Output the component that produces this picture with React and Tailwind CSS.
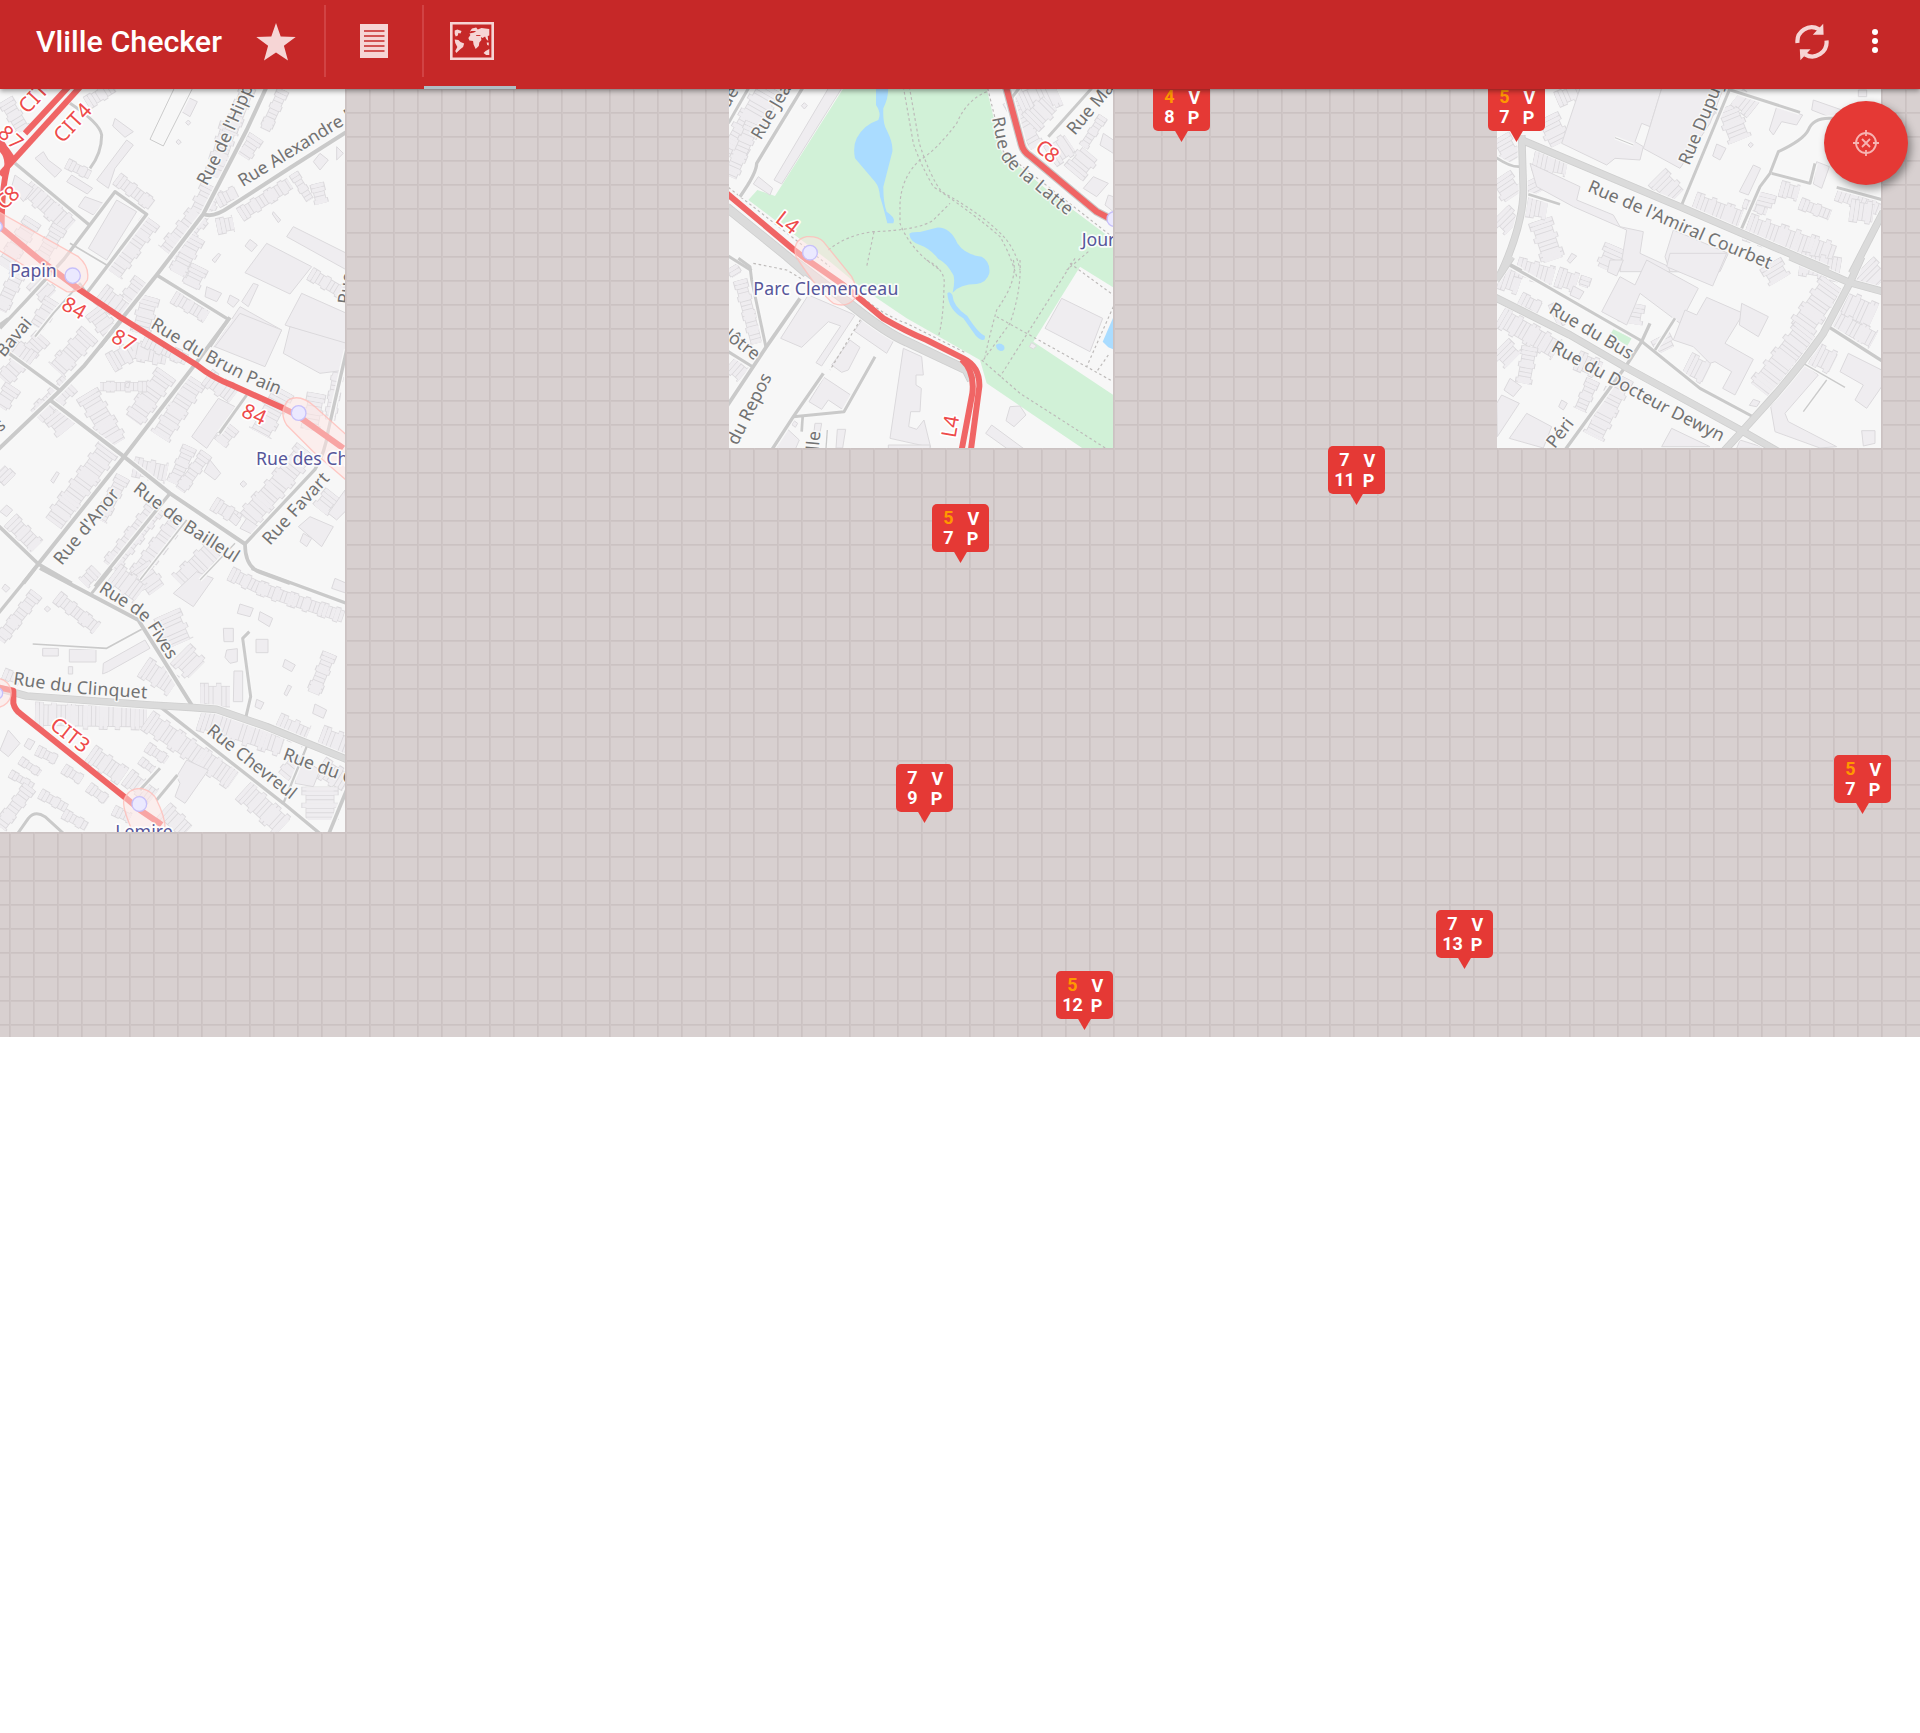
import React, { useId } from "react";

/* Map sections are drawn on a grid of one third of a pixel. */
const OUTLINE = "#dbd9dc";
const BUILDING = "#efedf0";

const leftTile = {
  x: 0, y: 80, w: 345, h: 752,
  sections: [
    {
      x: 0, y: 80,
      rows: [
        ["M640,320 L600,400 L505,520", 62], ["M690,130 L640,290", 48], ["M745,20 L690,160", 40],
        ["M80,320 L210,440", 50], ["M455,420 L340,580", 50], ["M425,600 L380,660", 40],
        ["M100,420 L10,560", 46], ["M180,440 L120,540", 40], ["M200,250 L270,285", 26],
        ["M350,295 L455,375", 34], ["M850,30 L795,150", 30], ["M770,170 L730,230", 40],
        ["M650,365 L710,335", 34], ["M720,405 L870,310", 36], ["M590,470 L530,580", 46],
        ["M650,440 L700,430", 40], ["M300,640 L380,700", 56], ["M280,690 L340,770", 50],
        ["M600,560 L570,620", 46], ["M930,580 L1030,640", 34], ["M60,570 L0,690", 40],
        ["M950,310 L965,370", 34], ["M880,280 L930,360", 24], ["M15,60 L70,150", 40],
        ["M520,650 L620,710", 34], ["M450,650 L420,760", 50], ["M100,600 L150,650", 50],
        ["M260,70 L340,20", 34], ["M160,660 L110,740", 44],
      ],
      shapes: [
        "M350,360 L410,395 L320,540 L265,505Z", "M800,490 L935,560 L870,642 L735,578Z",
        "M880,440 L1040,520 V570 L860,470Z", "M720,680 L845,750 L820,800 H640Z", "M905,640 L1040,700 V800 L855,735Z",
        "M45,285 L100,325 L70,365 L35,320Z", "M215,285 L278,325 L262,342 L200,305Z", "M255,350 L310,370 L280,405 L235,380Z",
        "M380,180 L400,195 L345,265 L325,325 L290,300Z", "M345,115 L400,155 L375,172 L338,138Z",
        "M130,215 L145,240 L185,270 L165,292 L105,235Z", "M960,220 L985,240 L960,270 L940,245Z", "M1010,200 L1030,220 L1010,240Z",
        "M560,50 L592,65 L570,110 L545,95Z", "M620,620 L665,640 L650,665 L615,650Z", "M760,610 L775,615 L745,680 L725,665Z",
        "M750,478 L772,495 L755,515 L735,498Z", "M690,645 L718,660 L700,682 L682,668Z", "M820,395 L842,420 L835,428 L817,402Z",
        "M655,520 L662,524 L645,548 L636,540Z", "M565,120 L572,128 L565,136 L557,128Z", "M535,178 L544,186 L536,194 L528,186Z",
      ],
      major: [],
      roads: [
        ["M800,20 L740,150 L610,402 L470,585 L370,710 L300,800", 12], ["M1045,152 L860,270 L690,380 Q640,415 610,402", 12],
        ["M470,585 L685,718 L630,800", 10], ["M45,250 L268,435", 10], ["M0,745 L80,660 L190,540 L345,335 L440,403 L260,640", 10],
        ["M265,645 L240,610 L160,700 L105,770", 6], ["M210,490 L320,555", 5], ["M210,70 Q300,130 305,165 Q305,220 270,265", 9],
        ["M525,20 L450,178 L490,198 L580,20", 3],
      ],
      transit: ["M215,10 L75,160", "M250,10 L0,285", "M-5,200 Q30,225 20,270 Q5,330 5,445 L120,540 L240,630 L357,709", "M-5,175 L40,240"],
      halos: ["M-5,395 L235,530 Q270,560 262,600 Q240,640 200,635 L-5,510Z"],
      stops: [[218, 587, 23], [-9, 440, 16]],
      names: [["Papin", 30, 590, 140]],
      lines: [["CIT4", 217, 128, -47, 134], ["CIT4", 112, 40, -47, 134], ["87", 33, 172, 42, 74], ["C8", 22, 352, -42, 70], ["84", 223, 683, 30, 72]],
      streets: [["Rue de l'Hippodrome", "M620,320 Q672,225 707,145 L822,-120"], ["Rue Alexandre D", "M728,322 L1028,137 L1228,13"], ["Rue", "M1050,674 L1064,560"]],
    },
    {
      x: 0, y: 320,
      rows: [
        ["M130,50 L10,180", 46], ["M270,40 L170,150", 54], ["M210,190 L110,290", 54], ["M260,220 L350,370", 60],
        ["M330,380 L160,610", 60], ["M160,280 L200,330", 60], ["M500,160 L400,300", 56], ["M330,130 L400,90 L500,110", 50],
        ["M440,200 L300,200", 26], ["M590,180 L480,350", 54], ["M400,440 L500,460", 50], ["M620,170 L700,230", 46],
        ["M850,210 L780,340", 60], ["M950,220 L930,330", 46], ["M1020,120 L990,300", 30], ["M920,390 L830,500 L740,600", 60],
        ["M700,320 L660,370", 36], ["M640,550 L720,600", 36], ["M470,560 L330,740", 50], ["M370,470 L300,600", 36],
        ["M540,590 L400,780", 46], ["M650,680 L540,790", 60], ["M30,600 L110,680", 44], ["M430,60 L560,120", 34],
        ["M30,480 L0,450", 40], ["M100,120 L30,70", 40], ["M40,200 L0,260", 44], ["M1000,520 L960,570", 46],
        ["M570,380 L520,490", 36], ["M620,400 L540,510", 32],
      ],
      shapes: [
        "M720,-20 L845,30 L795,140 L645,80Z", "M870,20 L1040,70 V150 L960,160 L850,100Z", "M655,235 L705,260 L620,385 L575,350Z",
        "M630,420 L662,460 L645,480 L612,455Z", "M930,590 L1000,620 L965,680 L895,620Z", "M910,640 L935,655 L920,680 L900,665Z",
        "M740,595 L775,620 L755,642 L720,625Z", "M700,578 L722,598 L708,618 L688,600Z", "M1035,510 L985,580 L1010,600 L1040,570Z",
        "M730,482 L740,492 L730,502 L720,492Z", "M178,92 L187,100 L178,108 L169,100Z", "M378,190 L390,186 L386,204 L375,200Z",
        "M170,455 L178,460 L160,490 L152,482Z", "M20,555 L38,570 L20,590 L0,575Z",
      ],
      major: [],
      roads: [
        ["M375,-12 L250,140 L180,212 L-5,388", 12], ["M20,95 L180,212", 10], ["M150,240 L372,410 L510,520 L735,672", 12],
        ["M690,-8 L580,140 L372,410 L115,732 L70,790", 12], ["M735,672 L945,448 Q975,400 985,330 L1040,90", 10],
        ["M735,672 Q735,740 780,757 L870,790", 11], ["M510,520 L285,800", 10], ["M705,670 L600,780", 4], ["M-5,617 L115,732 L215,790", 11],
        ["M740,225 L658,340", 9], ["M25,-5 L-5,18", 9], ["M560,600 L420,780", 5],
      ],
      transit: ["M355,-12 L590,135 Q640,175 700,197 L850,265 L890,285 L1030,385"],
      halos: ["M1045,350 L945,260 Q900,220 865,240 Q835,275 860,315 L940,395 L1045,486"],
      stops: [[896, 279, 22]],
      names: [["Rue des Champs", 768, 435, 0]],
      lines: [["87", 372, 60, 28, 72], ["84", 763, 282, 24, 72]],
      streets: [
        ["Bavai", "M12,114 L110,-4"], ["es", "M-24,355 L40,306"], ["Rue du Brun Pain", "M449,22 L602,116 L730,182 L890,247", 437],
        ["Rue d'Anor", "M185,738 L380,500", 277], ["Rue de Bailleul", "M397,512 L555,634 L740,752", 376], ["Rue Favart", "M810,678 L1008,458", 270],
      ],
    },
    {
      x: 0, y: 570,
      rows: [
        ["M110,70 L0,210", 34], ["M170,80 L290,175", 34], ["M420,-10 L470,60", 56], ["M500,130 L540,220", 70],
        ["M540,250 L590,300", 70], ["M430,290 L520,350", 56], ["M600,380 L690,380", 66], ["M105,435 L440,440", 66],
        ["M440,450 L700,630", 56], ["M730,660 L850,770", 60], ["M600,440 L850,520", 70], ["M830,460 L920,500", 56],
        ["M960,500 L1040,530", 60], ["M960,590 L1040,640", 56], ["M270,550 L370,620", 50], ["M380,620 L460,680", 46],
        ["M490,720 L560,785", 50], ["M110,540 L170,570", 26], ["M190,595 L245,630", 26], ["M265,650 L320,690", 26],
        ["M120,670 L200,715", 26], ["M190,730 L260,770", 26], ["M60,570 L120,610", 20], ["M30,610 L100,650", 20],
        ["M90,650 L0,770", 36], ["M990,250 L940,370", 36], ["M690,10 L770,50 L850,80 L1030,140", 36], ["M10,310 L60,330", 28],
        ["M340,720 L390,745", 26], ["M440,530 L500,570", 26], ["M900,560 L850,620", 40], ["M960,650 L960,750", 90],
        ["M420,570 L460,600", 20], ["M340,10 L420,70", 60], ["M290,0 L250,40", 34],
      ],
      shapes: [
        "M590,5 L640,25 L580,110 L520,70Z", "M310,280 L435,210 L450,235 L325,305 L308,312Z", "M208,238 H288 V276 H208Z",
        "M128,235 H175 V258 H128Z", "M205,290 H218 V312 H205Z", "M670,175 H700 V215 H672Z", "M768,208 H804 V248 H768Z",
        "M680,240 L712,236 V275 L690,280 L675,262Z", "M702,303 H728 V395 H700Z", "M720,102 L760,115 L750,140 L712,130Z",
        "M780,125 L818,145 L808,170 L775,150Z", "M855,268 L886,285 L875,305 L848,290Z", "M25,480 L60,520 L25,560 L0,540Z",
        "M560,570 L625,600 L555,700 L525,680 L540,640 L530,620Z", "M895,560 L960,600 L940,650 L885,640Z", "M945,402 L980,420 L970,445 L938,430Z",
        "M865,345 L875,350 L860,378 L852,372Z", "M770,388 L792,398 L782,418 L765,410Z", "M142,108 L152,117 L142,126 L133,117Z",
        "M15,42 L30,55 L18,67 L6,55Z", "M85,505 L105,515 L90,540 L72,528Z", "M1005,25 L1040,40 V70 L995,55Z",
      ],
      major: [["M-5,355 L80,378 L450,405 L570,412 L650,418 L800,470 L1045,570", 20]],
      roads: [
        ["M105,-5 L-5,130", 10], ["M120,-6 L415,150 L575,405", 12], ["M335,-5 L275,70", 9], ["M755,-5 L1045,102", 10],
        ["M98,222 L320,235 L425,178", 5], ["M480,410 L850,700 L965,795", 10], ["M920,530 L850,700", 7], ["M1040,660 L985,795", 11],
        ["M748,185 L728,205 L752,380 L738,440", 9], ["M480,595 L420,660", 9], ["M532,615 L470,690", 9], ["M50,795 L85,745 Q105,720 135,740 L190,790", 9],
      ],
      transit: ["M-5,352 L40,362 L40,400 Q45,420 60,430 L375,682 L420,720 L485,764"],
      halos: ["M400,790 Q365,710 372,690 Q385,653 425,655 Q460,665 470,690 Q500,750 495,790Z", "M-10,325 A42,42 0 0 1 -10,412Z"],
      stops: [[418, 702, 22], [-9, 370, 17]],
      names: [["Lemire", 346, 803, 172]],
      lines: [["CIT3", 211, 494, 38, 130]],
      streets: [
        ["Rue de Fives", "M294,64 L391,124 Q426,145 448,180 L508,275", 303], ["Rue du Clinquet", "M38,343 L235,371 L460,387", 405],
        ["Rue Chevreul", "M617,488 L900,712", 325], ["Rue du Clinquet", "M846,567 L1016,629 L1296,727"],
      ],
    },
  ],
};

const middleTile = {
  x: 729, y: 80, w: 384, h: 368,
  park: "M370,25 L800,25 L845,215 L1000,345 L1140,450 L1180,480 L1180,622 L1080,560 L940,785 L1180,945 L1180,1110 L1095,1110 L800,910 L780,840 L560,715 L420,620 L330,545 L85,360 L112,330 L165,348Z",
  water: [
    "M468,20 L504,20 Q507,50 490,85 Q488,130 500,150 Q520,190 517,215 L490,320 Q490,370 500,395 Q522,410 522,422 L520,430 L502,430 Q490,380 480,350 Q478,320 465,305 L405,235 Q398,200 410,175 Q430,135 475,120 Q485,100 468,75Z",
    "M568,462 Q570,455 600,456 L650,443 Q690,440 712,490 Q735,525 785,530 Q812,545 808,580 Q800,608 770,612 Q720,612 698,638 Q706,600 700,585 Q680,548 655,537 Q630,505 600,495 Q570,485 568,462Z",
    "M682,640 Q690,632 697,645 Q700,680 742,708 Q775,760 795,768 L794,778 Q785,784 768,768 L730,715 Q685,690 682,640Z",
    "M828,795 Q838,785 852,797 Q858,812 842,813 Q828,810 828,795Z", "M1148,785 L1185,700 V810 L1165,802Z",
  ],
  sections: [
    {
      x: 720, y: 80,
      rows: [
        ["M150,20 L30,230", 70], ["M100,130 L30,290", 40], ["M870,60 L950,200", 40], ["M900,80 L1010,30", 80],
        ["M930,130 L990,70", 60], ["M990,230 L1050,190", 60], ["M1150,110 L1090,200", 24], ["M1060,280 L1110,220", 60],
      ],
      shapes: [
        "M325,25 L365,25 L185,312 L162,300Z", "M115,290 L158,325 L150,345 L100,312Z", "M1150,160 L1180,180 V220 L1140,195Z",
        "M1120,290 L1165,310 L1130,350 L1090,325Z", "M1165,345 L1180,350 V395 L1155,375Z", "M253,68 L262,77 L253,87 L244,77Z",
      ],
      major: [["M20,382 L200,528 L260,580", 26]],
      roads: [
        ["M250,20 L110,250 Q110,280 60,350", 10], ["M88,20 L25,130", 9], ["M897,25 L870,60", 9], ["M1115,25 L985,170", 9], ["M20,525 L95,572", 9],
        ["M858,20 L905,195 Q910,215 930,228 L1130,395 L1178,420", 25],
      ],
      paths: [
        "M550,20 L580,190 Q600,250 640,320 Q760,400 840,470 Q870,520 890,590", "M568,20 L598,190 Q630,290 665,335 Q800,410 860,480 Q890,520 900,570",
        "M800,35 Q740,60 710,130 Q650,210 600,240 Q545,290 540,370 L540,430 Q570,510 660,570", "M325,510 Q380,465 460,455 Q600,450 640,420 L690,370",
        "M462,455 L440,560", "M1105,515 L1040,570", "M803,25 L850,215 L1170,465", "M25,322 L330,560",
      ],
      transit: ["M20,340 L220,508 L262,540", "M858,20 L905,195 Q910,215 930,228 L1130,395 L1178,420"],
      halos: ["M228,530 Q215,480 260,470 Q295,468 310,485 L395,590 Q420,640 405,655 Q380,685 340,670 Q300,640 228,530Z"],
      stops: [[270, 518, 22], [1183, 417, 22]],
      names: [["Journal", 1085, 499, 0]],
      lines: [["C8", 983, 213, 40, 70], ["L4", 203, 427, 38, 68]],
      streets: [["Rue Jean", "M122,182 L252,-38"], ["Rue", "M8,115 L62,25"], ["Rue de la Latte", "M816,114 L834,205 Q843,242 878,272 L1060,423", 387], ["Rue Macé", "M1064,168 L1240,-40"]],
    },
    {
      x: 720, y: 260,
      rows: [["M60,60 L110,250", 34], ["M30,310 L70,345", 44], ["M35,20 L50,45", 30]],
      shapes: [
        "M265,105 L405,165 L305,318 L288,308 L362,198 L325,185 L245,262 L182,235Z", "M430,175 L522,240 L500,280 L403,213Z",
        "M390,240 L420,262 L385,330 L365,337 L335,315Z", "M312,352 L392,405 L370,450 L325,420 L305,448 L267,425Z",
        "M550,265 L605,290 L610,345 H588 V375 L604,385 L600,455 H572 L566,500 L590,508 L612,480 L632,562 L510,535Z",
        "M870,440 L900,438 L918,465 L882,500 L858,482Z", "M815,495 L910,565 H860 L797,520Z", "M1025,115 L1148,175 L1110,275 L975,205Z",
        "M200,505 L238,540 L225,570 H165Z", "M285,490 L305,490 L298,530 H280Z", "M352,508 H377 L368,564 H348Z", "M505,555 H630 V570 H505Z",
        "M222,482 L233,490 L226,502 L216,494Z", "M935,248 L950,258 L940,267 L928,260Z",
      ],
      major: [["M225,5 L400,140 Q500,220 560,245 L740,330 L755,360", 26]],
      roads: [
        ["M55,-5 L90,20 L95,60 L138,262", 9], ["M240,115 L138,262 L20,440", 11], ["M20,272 L100,322", 9], ["M465,290 L372,455 L220,470", 9],
        ["M310,340 L220,470 L155,570", 10], ["M248,470 L245,515", 8], ["M322,510 L318,565", 4],
      ],
      paths: [
        "M620,0 Q680,30 672,80 Q670,180 655,230", "M900,0 Q905,90 870,190 L790,300", "M1065,-5 L935,200 L840,350", "M830,170 L1180,365",
        "M880,0 Q895,60 830,150 Q810,220 795,290", "M785,300 L900,400 L1165,570", "M1050,10 L1180,105", "M1180,140 L1100,320", "M100,10 L200,30 L250,60",
        "M430,165 L330,330", "M430,115 Q500,170 560,190 L740,280", "M1165,285 L1130,335",
      ],
      transit: ["M258,-3 L370,75 L430,125 L490,175 Q560,215 620,240 L730,295 Q780,320 778,380 L752,575", "M725,298 Q765,335 757,400 L724,575"],
      halos: [], stops: [],
      names: [["Parc Clemenceau", 100, 106, 435]],
      lines: [["L4", 690, 499, -80, 66]],
      streets: [["Nôtre", "M-10,216 L125,319"], ["du Repos", "M52,558 L165,333"], ["lle", "M296,572 L304,490"]],
    },
  ],
};

const rightTile = {
  x: 1497, y: 80, w: 384, h: 368,
  sections: [
    {
      x: 1480, y: 80,
      rows: [
        ["M200,110 L240,190", 60], ["M230,60 L300,30", 40], ["M150,300 L170,340", 40], ["M160,240 L260,260", 50], ["M690,80 L640,140", 40],
        ["M530,290 L590,350", 60], ["M640,370 L780,420", 60], ["M740,80 L780,180", 60], ["M800,440 L1060,530", 70], ["M1070,340 L1200,390", 36],
        ["M900,325 L955,340", 40], ["M60,290 L100,350", 60], ["M60,400 L100,440", 60], ["M180,420 L220,540", 60], ["M60,170 L100,240", 50],
        ["M790,370 L860,395", 22], ["M960,370 L1050,405", 30], ["M860,340 L850,380", 50], ["M820,90 L770,50", 50],
        ["M140,380 L200,390", 50], ["M1110,390 L1180,400", 56], ["M410,500 L380,570", 60],
      ],
      shapes: [
        "M300,25 H545 L510,140 L485,130 L465,185 L490,200 L480,240 L405,235 L380,255 L245,190Z", "M545,25 H730 L690,130 L600,265 L490,205Z",
        "M150,250 L300,320 L290,360 L400,405 L420,440 L490,455 L480,520 L600,575 H420 L440,450 L280,380 L170,320Z",
        "M580,450 L745,520 L720,575 H570 L555,530Z", "M890,80 L968,105 L950,135 L905,125 L880,165 L868,150Z", "M820,255 L842,265 L805,345 L778,335Z",
        "M1010,245 L1048,260 L1025,325 L1000,312Z", "M710,192 L738,205 L720,240 L698,228Z", "M1000,60 L1100,95 L1085,125 L995,90Z",
        "M812,187 L820,194 L812,203 L804,195Z", "M275,520 L290,528 L270,550 L262,542Z", "M1135,30 H1160 V50 H1135Z",
      ],
      major: [["M125,180 L600,380 L785,460 L1045,570", 20], ["M125,165 L130,330 Q130,430 65,575", 20], ["M1210,395 L1115,580", 20]],
      roads: [
        ["M752,20 L605,375", 9], ["M745,28 L960,97", 9], ["M1060,115 Q1000,110 985,150 Q970,180 895,215 L870,280 L840,320 L785,445", 9],
        ["M875,280 L990,310 L1005,250", 9], ["M1070,322 L1210,360", 9], ["M45,230 Q90,262 120,260", 8], ["M145,343 L240,373", 8], ["M80,548 L125,572", 9],
        ["M405,173 L460,195", 3],
      ],
      transit: [], halos: [], stops: [], names: [], lines: [],
      streets: [["Rue Dupuytren", "M628,258 L660,182 L800,-160"], ["Rue de l'Amiral Courbet", "M320,333 L518,418 L683,491 L900,581", 595]],
    },
    {
      x: 1480, y: 260,
      green: "M400,208 L455,235 L442,257 L390,225Z",
      rows: [
        ["M60,170 L230,270", 56], ["M150,260 L130,370", 40], ["M290,300 L360,330", 50], ["M430,350 L340,530", 56], ["M60,50 L120,70", 60],
        ["M110,20 L220,50", 50], ["M1080,30 L960,10", 60], ["M1060,70 L960,210", 70], ["M980,210 L840,390", 70], ["M1070,120 L1180,170", 70],
        ["M1050,170 L1180,240", 50], ["M1000,280 L1060,310", 60], ["M1150,20 L1200,70", 70], ["M120,115 L180,145", 34], ["M230,50 L290,70", 50],
        ["M540,230 L560,270", 50], ["M620,310 L680,340", 60], ["M870,10 L900,60", 60], ["M60,260 L100,300", 60], ["M340,360 L300,450", 34],
        ["M460,130 L450,190", 60], ["M220,170 L240,160", 60], ["M320,50 L310,80", 26],
      ],
      shapes: [
        "M420,50 L465,75 L500,0 L655,85 L600,190 L480,100 L440,195 L365,155Z", "M570,-20 H740 L698,78 L560,20Z",
        "M680,112 L790,160 L735,250 L820,298 L765,405 L728,385 L755,335 L705,305 L690,310 L640,260 L580,240 L615,150 L650,165Z",
        "M785,130 L865,170 L835,230 L778,195Z", "M50,430 L65,405 L118,430 L52,530Z", "M140,460 L215,500 L190,564 L88,535Z",
        "M575,505 L690,560 H545Z", "M1105,280 L1205,330 V380 L1160,445 L1125,420 L1150,375 L1080,335Z",
        "M970,310 L1015,345 L915,460 L925,485 L1070,560 L1020,564 L885,515 L872,440Z", "M1145,512 L1185,512 V550 L1150,558Z",
        "M280,78 L312,95 L298,118 L270,105Z", "M390,0 H430 L410,48 L382,35Z", "M245,420 L262,430 L250,450 L236,440Z", "M90,355 L125,380 L100,410 L72,390Z",
        "M780,540 L860,565 H770Z", "M820,418 L840,425 L830,440 L808,436Z",
      ],
      major: [
        ["M95,-10 L48,60", 20], ["M45,112 L270,225 L430,318 L790,515 L895,575", 20], ["M930,-10 L1110,68 L1210,95", 20],
        ["M1145,-10 L1110,68 L1030,220 Q960,320 880,410 L790,510 L730,575", 20],
      ],
      roads: [
        ["M80,10 L480,240 L660,385 L815,468", 9], ["M510,190 L485,245 L440,315 L255,570", 10], ["M585,175 L525,270", 8], ["M1045,200 L1210,305", 10],
        ["M970,310 L1095,382", 4], ["M1040,360 L970,455", 4],
      ],
      transit: [], halos: [], stops: [], names: [], lines: [],
      streets: [
        ["Rue du Bus", "M204,157 L467,311", 282], ["Rue du Docteur Dewyn", "M211,272 L387,370 L572,471 L750,560", 580], ["Péri", "M224,568 L298,473"],
      ],
    },
  ],
};

function Street({ text, d, len }) {
  const id = useId();
  const fit = len ? { textLength: len, lengthAdjust: "spacing" } : {};
  return (
    <>
      <path id={id} d={d} fill="none" />
      <text fontSize="53" fill="#727272" stroke="#f9f9f9" strokeWidth="9" strokeOpacity="0.85" strokeLinejoin="round" paintOrder="stroke" {...fit}>
        <textPath href={"#" + id} {...fit}>{text}</textPath>
      </text>
    </>
  );
}

function Tile({ tile, className }) {
  const layer = (name, draw) => (
    <g key={name}>
      {tile.sections.map((s, i) => (
        <g key={i} transform={`translate(${s.x} ${s.y}) scale(0.33333)`}>{draw(s)}</g>
      ))}
    </g>
  );
  return (
    <svg className={className} viewBox={`${tile.x} ${tile.y} ${tile.w} ${tile.h}`} fontFamily='"Noto Sans", "Open Sans", sans-serif'>
      <rect x={tile.x} y={tile.y} width={tile.w} height={tile.h} fill="#f7f7f7" />
      {tile.park && (
        <g transform="translate(720 80) scale(0.33333)">
          <path d={tile.park} fill="#d1f1d7" />
          {tile.water.map((d) => <path key={d} d={d} fill="#aadcff" />)}
        </g>
      )}
      {layer("buildings", (s) => (
        <>
          {s.rows.map(([d, w]) => (
            <g key={d} fill="none">
              <path d={d} stroke={OUTLINE} strokeWidth={w * 1.2 + 4} strokeDasharray="26 22 16 32" />
              <path d={d} stroke={OUTLINE} strokeWidth={w * 0.92 + 4} />
              <path d={d} stroke={BUILDING} strokeWidth={w * 1.2 - 2} strokeDasharray="10 3 10 25 13 35" strokeDashoffset="-1.5" />
              <path d={d} stroke={BUILDING} strokeWidth={w * 0.92 - 1} strokeDasharray="10.5 2.5" strokeDashoffset="-1.5" />
            </g>
          ))}
          {s.shapes.map((d) => <path key={d} d={d} fill={BUILDING} stroke={OUTLINE} strokeWidth="3" />)}
          {s.green && <path d={s.green} fill="#d1f1d7" />}
        </>
      ))}
      {layer("paths", (s) => (s.paths || []).map((d) => <path key={d} d={d} fill="none" stroke="#bdbab9" strokeWidth="3.5" strokeDasharray="8 8" />))}
      {layer("casing", (s) => [...s.major, ...s.roads].map(([d, w]) => <path key={d} d={d} fill="none" stroke="#f8f8f8" strokeWidth={w + 8} strokeLinejoin="round" />))}
      {layer("roads", (s) => s.roads.map(([d, w]) => <path key={d} d={d} fill="none" stroke="#cacaca" strokeWidth={w} strokeLinejoin="round" />))}
      {layer("majorEdge", (s) => s.major.map(([d, w]) => <path key={d} d={d} fill="none" stroke="#cfcfcf" strokeWidth={w + 3} strokeLinejoin="round" />))}
      {layer("major", (s) => s.major.map(([d, w]) => <path key={d} d={d} fill="none" stroke="#dbdbdb" strokeWidth={w - 2} strokeLinejoin="round" />))}
      {layer("transit", (s) => s.transit.map((d) => <path key={d} d={d} fill="none" stroke="#f06565" strokeWidth="18" strokeLinejoin="round" />))}
      {layer("halos", (s) => s.halos.map((d) => <path key={d} d={d} fill="#ffe6e3" fillOpacity="0.5" stroke="#ffbdb8" strokeOpacity="0.8" strokeWidth="4" />))}
      {layer("stops", (s) => s.stops.map(([x, y, r]) => <circle key={x} cx={x} cy={y} r={r} fill="#ebe9ff" stroke="#c7c0fa" strokeWidth="4" />))}
      {layer("streets", (s) => s.streets.map(([text, d, len]) => <Street key={d} text={text} d={d} len={len} />))}
      {layer("lines", (s) =>
        s.lines.map(([text, x, y, a, len]) => (
          <text key={text + x} transform={`translate(${x} ${y}) rotate(${a})`} dy="0.36em" textAnchor="middle" textLength={len} fontSize="62" fill="#ee4a4a" stroke="#fff" strokeWidth="10" strokeLinejoin="round" paintOrder="stroke">
            {text}
          </text>
        ))
      )}
      {layer("names", (s) =>
        s.names.map(([text, x, y, len]) => (
          <text key={text} x={x} y={y} {...(len ? { textLength: len } : {})} fontSize="53" fill="#56569a" stroke="#fff" strokeWidth="11" strokeOpacity="0.85" strokeLinejoin="round" paintOrder="stroke">
            {text}
          </text>
        ))
      )}
    </svg>
  );
}

function Pin({ className, bikes, places, low }) {
  return (
    <div className={"absolute h-[48px] w-[57px] rounded-[5px] bg-[#e53935] font-[Roboto] text-[18px] leading-[20px] font-bold text-white " + className}>
      <div className="grid grid-cols-[33px_17px] pt-[4px] text-center">
        <span className={low ? "text-[#ff9800]" : ""}>{bikes}</span>
        <span className="relative top-px">V</span>
        <span>{places}</span>
        <span className="relative top-px -left-px">P</span>
      </div>
      <svg className="absolute top-[47px] left-[21px] h-[12px] w-[15px]" viewBox="0 0 15 12"><path d="M0.5,0 H14.5 L7.5,12Z" fill="#e53935" /></svg>
    </div>
  );
}

function StarIcon() {
  return (
    <svg className="h-[40px] w-[40px]" viewBox="0 0 40 40" fill="#f6d5d5">
      <path d="M20,1 L24.7,14.4 L39.7,15 L27.9,23.8 L32,38.6 L20,30.4 L8,38.6 L12.1,23.8 L0.3,15 L15.3,14.4Z" />
    </svg>
  );
}

function ListIcon() {
  return (
    <svg className="h-[34px] w-[28px]" viewBox="0 0 28 34">
      <rect width="28" height="34" fill="#f6d5d5" />
      <path d="M4,7 H24.5 M4,12 H24.5 M4,17 H24.5 M4,22 H24.5 M4,27 H24.5" stroke="#c62828" strokeWidth="1.5" />
    </svg>
  );
}

function WorldIcon() {
  return (
    <svg className="h-[38px] w-[44px]" viewBox="0 0 42 38" preserveAspectRatio="none" fill="#f6d5d5">
      <rect x="1.25" y="1.25" width="39.5" height="35.5" fill="none" stroke="#f6d5d5" strokeWidth="2.5" />
      <path d="M4.5,8.5 L7,7.5 L11,9 L10,11.5 L8,11 L7.5,13.5 L5.5,14.5 L4.5,12Z M4.5,17.5 L8,18 L10,20 L13.5,21.5 L12.5,25 L9.5,27.5 L6,31 L5,29 L7,25 L5,21Z" />
      <path d="M19,9.5 L21,6.5 L25,5.5 L26.5,7.5 L30,6 L37.5,7 V13.5 L36,14 L36.5,19 L34.5,17 L33.5,14.5 L31,16 L29.5,15 L30,18 L28,20.5 L27.5,24 L24.5,27 L22.5,22.5 L22,19 L18.5,18.5 L17.5,16 L19.5,13 L18.5,11.5 L23,10.5 L25,9Z" />
      <path d="M35,20.5 H37 V23.5 L35.5,23Z M34,29 L37.5,27 V33 H34.5 L32,31Z" />
      <path d="M20,9.5 H24 M25,13.5 H29" stroke="#c62828" strokeWidth="0.9" />
    </svg>
  );
}

function RefreshIcon() {
  return (
    <svg className="h-[38px] w-[36px]" viewBox="0 0 36 38">
      <path d="M3.5,20 A14.3,14.3 0 0 1 25,6.2 M32.5,17.5 A14.3,14.3 0 0 1 11,31.4" fill="none" stroke="#f6d5d5" strokeWidth="4.2" />
      <path d="M29.2,0.8 L29.6,11.8 L18.8,11.8Z M5.8,26.2 L16.6,26.2 L6.4,37.2Z" fill="#f6d5d5" />
    </svg>
  );
}

export default function App() {
  return (
    <div className="min-h-[1733px] w-full bg-white">
      <header className="relative z-10 flex h-[89px] items-start bg-[#c62828] shadow-[0_2px_5px_rgba(0,0,0,0.4)]">
        <h1 className="ml-[36px] w-[192px] flex-none pt-[24px] font-[Roboto] text-[30.4px] leading-[36px] font-medium whitespace-nowrap text-white">Vlille Checker</h1>
        <nav className="flex h-[89px] flex-none">
          <button className="flex w-[96px] flex-none justify-center pt-[22px]"><StarIcon /></button>
          <span className="mt-[5px] h-[72px] w-[2px] bg-[#d14344]" />
          <button className="flex w-[96px] flex-none justify-center pt-[24px]"><ListIcon /></button>
          <span className="mt-[5px] h-[72px] w-[2px] bg-[#d14344]" />
          <button className="flex w-[92px] flex-none justify-center border-b-[3px] border-[#b0bec5] pt-[22px] pl-[4px]"><WorldIcon /></button>
        </nav>
        <div className="ml-auto flex h-[84px] items-center">
          <button className="mr-[42px]"><RefreshIcon /></button>
          <button className="mr-[42px] flex flex-col gap-[3px] pb-[2px]">
            <span className="h-[6px] w-[6px] rounded-full bg-white" />
            <span className="h-[6px] w-[6px] rounded-full bg-white" />
            <span className="h-[6px] w-[6px] rounded-full bg-white" />
          </button>
        </div>
      </header>

      <main className="relative h-[948px] overflow-hidden bg-[#d8d0d0] bg-[linear-gradient(to_right,#cbc2c2_1px,#cfc6c6_1px,#cfc6c6_2px,transparent_2px),linear-gradient(to_bottom,#cbc2c2_1px,#cfc6c6_1px,#cfc6c6_2px,transparent_2px)] bg-[size:24px_24px] bg-[position:9px_23px]">
        <Tile tile={leftTile} className="absolute -top-[9px] left-0 h-[752px] w-[345px]" />
        <Tile tile={middleTile} className="absolute -top-[9px] left-[729px] h-[368px] w-[384px]" />
        <Tile tile={rightTile} className="absolute -top-[9px] left-[1497px] h-[368px] w-[384px]" />

        <Pin className="-top-[6px] left-[1153px]" bikes="4" places="8" low />
        <Pin className="-top-[6px] left-[1488px]" bikes="5" places="7" low />
        <Pin className="top-[415px] left-[932px]" bikes="5" places="7" low />
        <Pin className="top-[357px] left-[1328px]" bikes="7" places="11" />
        <Pin className="top-[675px] left-[896px]" bikes="7" places="9" />
        <Pin className="top-[666px] left-[1834px]" bikes="5" places="7" low />
        <Pin className="top-[821px] left-[1436px]" bikes="7" places="13" />
        <Pin className="top-[882px] left-[1056px]" bikes="5" places="12" low />

        <button className="absolute top-[12px] left-[1824px] flex h-[84px] w-[84px] items-center justify-center rounded-full bg-[#e53935] shadow-[3px_4px_9px_rgba(0,0,0,0.4)]">
          <svg className="h-[26px] w-[26px]" viewBox="0 0 26 26" fill="none" stroke="#f7b4b2" strokeWidth="1.8">
            <circle cx="13" cy="13" r="10" />
            <path d="M13,0 V6 M13,20 V26 M0,13 H6 M20,13 H26 M9,9 L17,17 M17,9 L9,17" />
          </svg>
        </button>
      </main>
    </div>
  );
}
